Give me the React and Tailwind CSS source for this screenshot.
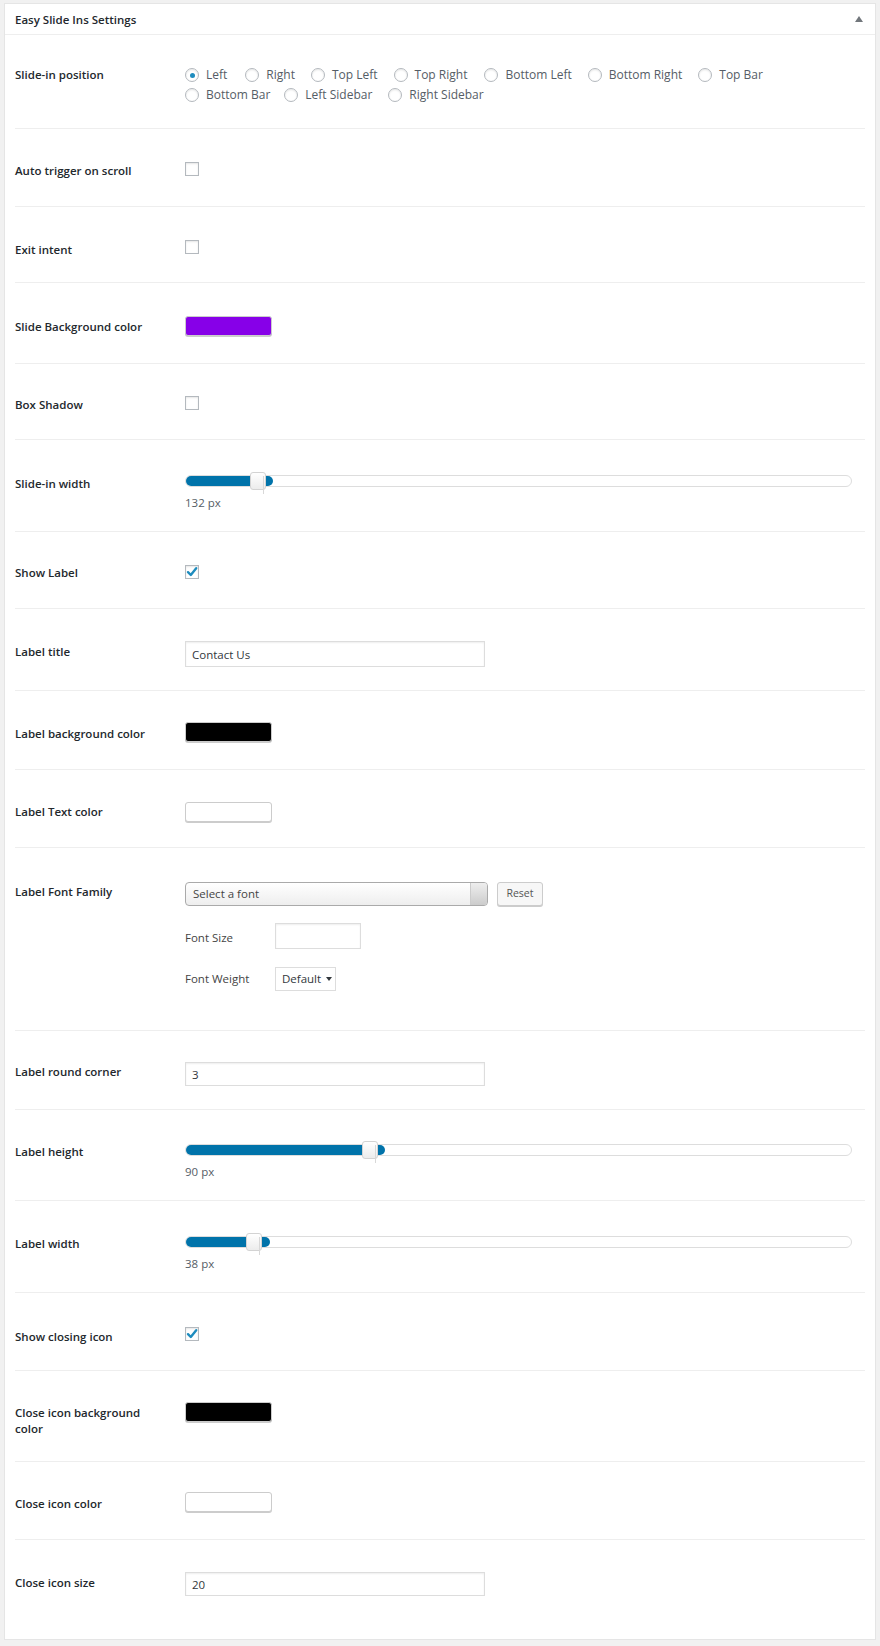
import React from "react";

function Check({ checked }) {
  return (
    <div className="relative h-[14px] w-[14px] border border-[#b4b9be] bg-white shadow-[inset_0_1px_2px_rgba(0,0,0,0.1)]">
      {checked && (
        <svg viewBox="0 0 14 14" className="absolute left-[-1px] top-[-1px] h-[14px] w-[14px]">
          <path d="M3 7.2 L5.8 10 L11.2 3.2" fill="none" stroke="#1e8cbe" strokeWidth="2.4" strokeLinecap="round" strokeLinejoin="round" />
        </svg>
      )}
    </div>
  );
}

function Radio({ label, checked, gap = "mr-[16px]" }) {
  return (
    <div className={`flex h-[20px] items-center ${gap}`}>
      <div className="flex h-[14px] w-[14px] items-center justify-center rounded-full border border-[#b4b9be] bg-white shadow-[inset_0_1px_2px_rgba(0,0,0,0.1)]">
        {checked && <div className="h-[5px] w-[5px] rounded-full bg-[#1e8cbe]" />}
      </div>
      <span className="ml-[7px] text-[12px] text-[#555d66]">{label}</span>
    </div>
  );
}

function Swatch({ color }) {
  return (
    <div
      className="h-[20px] w-[87px] rounded-[3px] border border-[#cccccc] shadow-[0_1px_0_#cccccc]"
      style={{ backgroundColor: color }}
    />
  );
}

function TextInput({ value, tall }) {
  return (
    <input
      readOnly
      defaultValue={value}
      className={`block w-[300px] border border-[#dddddd] bg-white px-[6px] text-[11.5px] text-[#32373c] shadow-[inset_0_1px_2px_rgba(0,0,0,0.07)] outline-none ${tall ? "h-[26px]" : "h-[24px]"}`}
    />
  );
}

function Slider({ fill, handle, value }) {
  return (
    <div>
      <div className="relative h-[12px] w-[667px] rounded-full border border-[#dddddd] bg-white">
        <div className="h-full rounded-full bg-[#0073aa]" style={{ width: fill }} />
        <div
          className="absolute top-[-4px] h-[18px] w-[16px] rounded-[3px] border border-[#d3d3d3] bg-gradient-to-b from-white to-[#ececec]"
          style={{ left: handle }}
        >
          <div className="absolute left-[12px] top-[3px] h-[18px] w-px bg-[#d8d8d8]" />
        </div>
      </div>
      <div className="mt-[8px] text-[11.5px] leading-[16px] text-[#555d66]">{value}</div>
    </div>
  );
}

function Row({ rowClass, labelClass, label, children, last }) {
  return (
    <div className={`mx-[10px] flex items-start ${last ? "" : "border-b border-[#eeeeee]"} ${rowClass}`}>
      <div className={`w-[170px] shrink-0 pr-[30px] text-[11.5px] font-semibold leading-[16px] text-[#23282d] ${labelClass}`}>
        {label}
      </div>
      <div className="flex-1">{children}</div>
    </div>
  );
}

export default function App() {
  return (
    <div className="min-h-[1646px] bg-[#f1f1f1] px-[4px] pt-[3px] font-['Open_Sans',sans-serif]">
      <div className="border border-[#e5e5e5] bg-white">
        <div className="flex h-[31px] items-center justify-between border-b border-[#eeeeee] pl-[10px] pr-[12px]">
          <span className="mt-[2px] text-[11.5px] font-semibold text-[#23282d]">Easy Slide Ins Settings</span>
          <svg viewBox="0 0 8 6" className="h-[6px] w-[8px]">
            <path d="M0 6 L4 0 L8 6 Z" fill="#72777c" />
          </svg>
        </div>

        <Row label="Slide-in position" rowClass="pt-[30px] pb-[23px]" labelClass="mt-[2px]">
          <div className="flex">
            <Radio label="Left" checked gap="mr-[18px]" />
            <Radio label="Right" />
            <Radio label="Top Left" />
            <Radio label="Top Right" gap="mr-[17px]" />
            <Radio label="Bottom Left" />
            <Radio label="Bottom Right" />
            <Radio label="Top Bar" />
          </div>
          <div className="flex">
            <Radio label="Bottom Bar" gap="mr-[14px]" />
            <Radio label="Left Sidebar" />
            <Radio label="Right Sidebar" />
          </div>
        </Row>

        <Row label="Auto trigger on scroll" rowClass="pt-[33px] pb-[27px]" labelClass="mt-[1px]">
          <Check />
        </Row>

        <Row label="Exit intent" rowClass="pt-[33px] pb-[24px]" labelClass="mt-[2px]">
          <Check />
        </Row>

        <Row label="Slide Background color" rowClass="pt-[33px] pb-[27px]" labelClass="mt-[3px]">
          <Swatch color="#8700e8" />
        </Row>

        <Row label="Box Shadow" rowClass="pt-[32px] pb-[26px]" labelClass="mt-[1px]">
          <Check />
        </Row>

        <Row label="Slide-in width" rowClass="pt-[35px] pb-[20px]" labelClass="mt-[1px]">
          <Slider fill={87} handle={64} value="132 px" />
        </Row>

        <Row label="Show Label" rowClass="pt-[33px] pb-[27px]" labelClass="mt-0">
          <Check checked />
        </Row>

        <Row label="Label title" rowClass="pt-[32px] pb-[23px]" labelClass="mt-[3px]">
          <TextInput value="Contact Us" tall />
        </Row>

        <Row label="Label background color" rowClass="pt-[31px] pb-[27px]" labelClass="mt-[4px]">
          <Swatch color="#000000" />
        </Row>

        <Row label="Label Text color" rowClass="pt-[32px] pb-[25px]" labelClass="mt-[2px]">
          <Swatch color="#ffffff" />
        </Row>

        <Row label="Label Font Family" rowClass="pt-[34px] pb-[39px]" labelClass="mt-[2px]">
          <div className="flex items-center">
            <div className="flex h-[24px] w-[303px] items-stretch overflow-hidden rounded-[4px] border border-[#aaaaaa] bg-gradient-to-b from-white to-[#eeeeee]">
              <span className="flex flex-1 items-center pl-[7px] text-[11.5px] text-[#444444]">Select a font</span>
              <div className="w-[17px] border-l border-[#cccccc] bg-gradient-to-b from-[#eeeeee] to-[#cccccc]" />
            </div>
            <div className="ml-[9px] flex h-[24px] w-[46px] items-center justify-center rounded-[3px] border border-[#cccccc] bg-[#f7f7f7] text-[10.5px] text-[#555555] shadow-[0_1px_0_#cccccc]">
              Reset
            </div>
          </div>
          <div className="mt-[17px] flex items-center">
            <span className="mt-[3px] w-[90px] text-[11.5px] text-[#444444]">Font Size</span>
            <div className="h-[26px] w-[86px] border border-[#dddddd] bg-white shadow-[inset_0_1px_2px_rgba(0,0,0,0.07)]" />
          </div>
          <div className="mt-[18px] flex items-center">
            <span className="w-[90px] text-[11.5px] text-[#444444]">Font Weight</span>
            <div className="flex h-[24px] w-[61px] items-center border border-[#dddddd] bg-white pl-[6px] text-[11.5px] text-[#32373c]">
              Default
              <svg viewBox="0 0 6 4" className="ml-[5px] h-[4px] w-[6px]">
                <path d="M0 0 L6 0 L3 4 Z" fill="#32373c" />
              </svg>
            </div>
          </div>
        </Row>

        <Row label="Label round corner" rowClass="pt-[31px] pb-[23px]" labelClass="mt-[2px]">
          <TextInput value="3" />
        </Row>

        <Row label="Label height" rowClass="pt-[34px] pb-[20px]" labelClass="mt-0">
          <Slider fill={199} handle={176} value="90 px" />
        </Row>

        <Row label="Label width" rowClass="pt-[34px] pb-[20px]" labelClass="mt-[1px]">
          <div className="mt-[1px]">
            <Slider fill={84} handle={60} value="38 px" />
          </div>
        </Row>

        <Row label="Show closing icon" rowClass="pt-[34px] pb-[25px]" labelClass="mt-[2px]">
          <Check checked />
        </Row>

        <Row label="Close icon background color" rowClass="pt-[31px] pb-[24px]" labelClass="mt-[3px]">
          <Swatch color="#000000" />
        </Row>

        <Row label="Close icon color" rowClass="pt-[30px] pb-[27px]" labelClass="mt-[4px]">
          <Swatch color="#ffffff" />
        </Row>

        <Row label="Close icon size" rowClass="pt-[32px] pb-[43px]" labelClass="mt-[3px]" last>
          <TextInput value="20" />
        </Row>
      </div>
    </div>
  );
}
